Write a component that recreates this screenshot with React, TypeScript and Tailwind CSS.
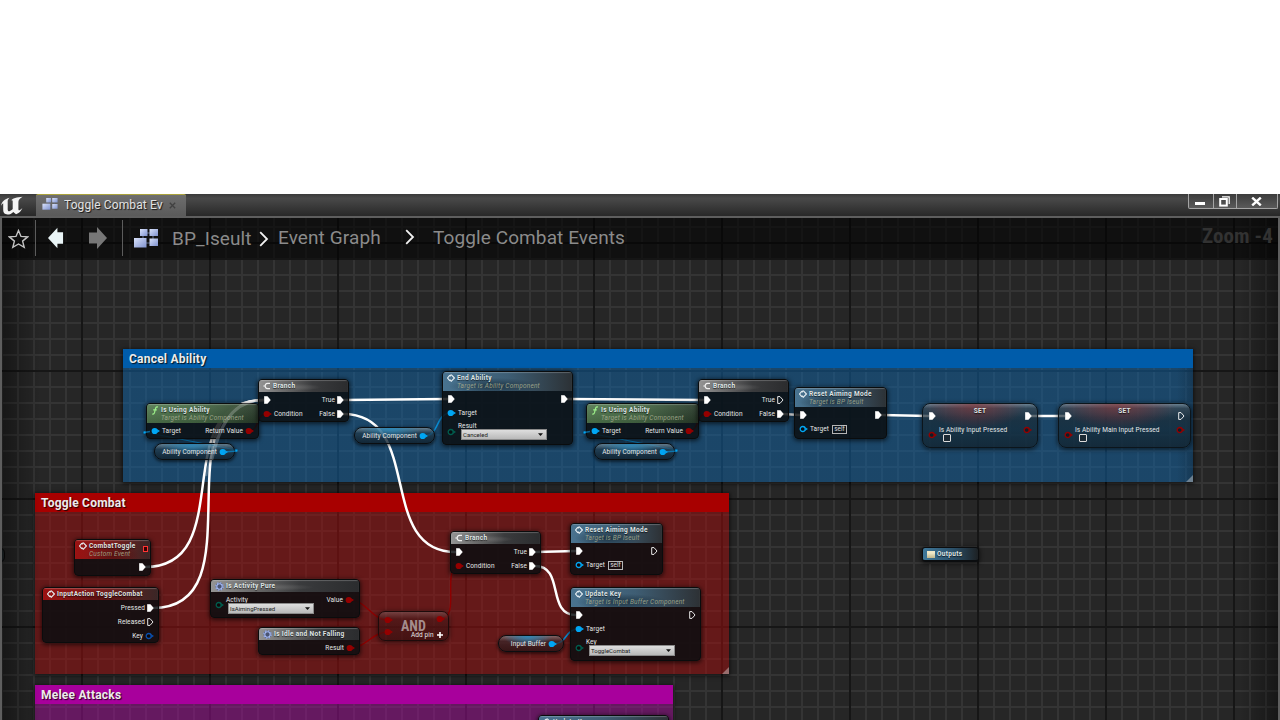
import type { ReactNode } from "react";

type PinKind = "exec" | "execOpen" | "dot" | "ring";

const BLUE = "text-[#00a6f4]";
const RED = "text-[#940000]";
const TEAL = "text-[#005d4e]";
const KEY = "text-[#0a4fae]";
const WHITE = "text-white";

function Pin({ kind, color = WHITE }: { kind: PinKind; color?: string }) {
  if (kind === "exec" || kind === "execOpen") {
    return (
      <svg className={`h-[8px] w-[7px] shrink-0 ${color}`} viewBox="0 0 7 8">
        <path
          d={kind === "exec" ? "M.2 .2H3.4L6.600 4L3.400 7.8H.2Z" : "M.7 .6H3L6 4L3 7.4H.7Z"}
          fill={kind === "exec" ? "currentColor" : "none"}
          stroke="currentColor"
          strokeWidth={kind === "exec" ? 0.2 : 0.9}
        />
      </svg>
    );
  }
  return (
    <svg className={`h-[8px] w-[9px] shrink-0 ${color}`} viewBox="0 0 9 8">
      <path d="M6.2 2.2L9 4L6.2 5.8Z" fill="currentColor" />
      <circle
        cx="3.7"
        cy="4"
        r={kind === "dot" ? 3.1 : 2.5}
        fill={kind === "dot" ? "currentColor" : "#0006"}
        stroke="currentColor"
        strokeWidth={kind === "dot" ? 0 : 1.3}
      />
    </svg>
  );
}

function EventIcon() {
  return (
    <svg className="h-[8px] w-[8px] shrink-0" viewBox="0 0 8 8" fill="none" stroke="#e6eef2" strokeWidth="1.1">
      <path d="M2.900 1.100L.6 4L2.900 6.900M4.200 .7L7.400 4L4.200 7.300L2.900 5.700M4.200 .7L2.900 2.300" />
    </svg>
  );
}

function BranchIcon() {
  return (
    <svg className="h-[8px] w-[8px] shrink-0" viewBox="0 0 8 8" fill="none" stroke="#f0f0f0" strokeWidth="1.2">
      <path d="M7 1.3H4.6Q2.2 1.5 2.1 4Q2.2 6.5 4.6 6.7H7M.3 4H2" />
    </svg>
  );
}

function FunctionIcon() {
  return (
    <svg className="h-[9px] w-[8px] shrink-0" viewBox="0 0 8 9" fill="none" stroke="#9df08a" strokeWidth="1.2">
      <path d="M7 1.1Q5 .4 4.5 2.6L3.5 6.7Q3 8.5 1.2 8M2.2 3.8H5.8" />
    </svg>
  );
}

function MacroIcon() {
  return (
    <svg className="h-[9px] w-[9px] shrink-0" viewBox="0 0 9 9" fill="none">
      <circle cx="4.5" cy="4.5" r="3.8" fill="#4a5472" />
      <circle cx="4.5" cy="4.5" r="3.7" stroke="#8fa6e8" strokeWidth="1.3" strokeDasharray="1.45 1.45" />
      <circle cx="4.5" cy="4.5" r="2.7" stroke="#a6baf2" strokeWidth="1.1" />
    </svg>
  );
}

const headFill = {
  blue: "bg-[radial-gradient(ellipse_at_40%_75%,#1a2f3ee0_0%,#1a2f3e00_42%),linear-gradient(90deg,#4e7c9be8_0%,#42657de8_50%,#2f3438e8_100%)]",
  green: "bg-[linear-gradient(180deg,#ffffff14_0%,#00000022_100%),linear-gradient(90deg,#5c8756e0_0%,#4c7249e0_50%,#2c3f2be0_100%)]",
  gray: "bg-[radial-gradient(ellipse_at_40%_60%,#77777799_0%,#77777700_35%),linear-gradient(90deg,#949494_0%,#686868_30%,#3a3b3d_60%,#2b2c2e_100%)]",
  red: "bg-[radial-gradient(ellipse_at_50%_80%,#40080899_0%,#40080800_50%),linear-gradient(90deg,#9b1111_0%,#7e1c1c_45%,#3a2626_100%)]",
};

function Title({ children }: { children: ReactNode }) {
  return (
    <span className="text-[6.5px] leading-[9px] font-bold tracking-[0.32px] text-[#dfe4e4] [text-shadow:0_1px_1px_#000a]">
      {children}
    </span>
  );
}

function GraphNode({
  place,
  tone,
  icon,
  title,
  sub,
  badge,
  children,
}: {
  place: string;
  tone: keyof typeof headFill;
  icon: ReactNode;
  title: string;
  sub?: string;
  badge?: boolean;
  children?: ReactNode;
}) {
  return (
    <section
      className={`absolute flex flex-col overflow-hidden rounded-[4px] border border-[#0a0c0d] bg-[#0b0e10d9] whitespace-nowrap shadow-[0_1px_4px_1px_#0009] ${place}`}
    >
      <header
        className={`flex shrink-0 gap-[2px] pl-[4px] shadow-[inset_0_1px_1px_#ffffff3a] ${sub ? "h-[19px] pt-[2px]" : "h-[12px] pt-[2px]"} ${headFill[tone]}`}
      >
        {icon}
        <div className="flex flex-col">
          <Title>{title}</Title>
          {sub && (
            <span className="text-[6.500px] leading-[7px] tracking-[0.200px] text-[#a3ab8f] italic opacity-90">{sub}</span>
          )}
        </div>
        {badge && (
          <span className="mt-[4px] mr-[2px] ml-auto h-[6px] w-[5px] border border-[#ff3434] bg-[#3a0000]" />
        )}
      </header>
      {children}
    </section>
  );
}

function Label({ children }: { children: ReactNode }) {
  return <span className="text-[6.5px] leading-[8px] tracking-[0.09px] text-[#e6e8e8]">{children}</span>;
}

function Row({ left, right, className = "h-[14px]" }: { left?: ReactNode; right?: ReactNode; className?: string }) {
  return (
    <div className={`flex shrink-0 items-center justify-between ${className}`}>
      <div className="flex items-center gap-[2px]">{left}</div>
      <div className="flex items-center gap-[2px]">{right}</div>
    </div>
  );
}

function Select({ value }: { value: string }) {
  return (
    <div className="flex h-[11px] w-[86px] items-center justify-between border border-[#8b8b8b] bg-linear-to-b from-[#dedede] to-[#b9b9b9] pr-[3px] pl-[1px] text-[6px] leading-[8px] text-[#222]">
      <span>{value}</span>
      <svg className="h-[3px] w-[5px]" viewBox="0 0 5 3">
        <path d="M0 .2H5L2.5 2.9Z" fill="#111" />
      </svg>
    </div>
  );
}

function UsingAbility({ place }: { place: string }) {
  return (
    <GraphNode place={`h-[36px] w-[113px] ${place}`} tone="green" icon={<FunctionIcon />} title="Is Using Ability" sub="Target is Ability Component">
      <Row
        className="h-[15px] pr-[4px] pl-[4px]"
        left={<><Pin kind="dot" color={BLUE} /><Label>Target</Label></>}
        right={<><Label>Return Value</Label><Pin kind="dot" color={RED} /></>}
      />
    </GraphNode>
  );
}

function Branch({ place, open }: { place: string; open?: boolean }) {
  return (
    <GraphNode place={`h-[43px] w-[91px] ${place}`} tone="gray" icon={<BranchIcon />} title="Branch">
      <Row
        className="mt-px h-[14px] pr-[4px] pl-[5px]"
        left={<Pin kind="exec" />}
        right={<><Label>True</Label><Pin kind={open ? "execOpen" : "exec"} /></>}
      />
      <Row
        className="h-[14px] pr-[4px] pl-[4px]"
        left={<><Pin kind="dot" color={RED} /><Label>Condition</Label></>}
        right={<><Label>False</Label><Pin kind="exec" /></>}
      />
    </GraphNode>
  );
}

function ResetAiming({ place, open }: { place: string; open?: boolean }) {
  return (
    <GraphNode place={`h-[52px] w-[93px] ${place}`} tone="blue" icon={<EventIcon />} title="Reset Aiming Mode" sub="Target is BP Iseult">
      <Row className="mt-px h-[14px] pr-[4px] pl-[5px]" left={<Pin kind="exec" />} right={<Pin kind={open ? "execOpen" : "exec"} />} />
      <Row
        className="h-[14px] px-[4px]"
        left={
          <>
            <Pin kind="ring" color={BLUE} />
            <Label>Target</Label>
            <span className="ml-px flex h-[9px] w-[15px] items-center justify-center border border-[#b5b5b5] text-[6.5px] leading-none text-[#ddd]">self</span>
          </>
        }
      />
    </GraphNode>
  );
}

function KeyedCall({
  place,
  title,
  sub,
  field,
  value,
  open,
}: {
  place: string;
  title: string;
  sub: string;
  field: string;
  value: string;
  open?: boolean;
}) {
  return (
    <GraphNode place={`h-[74px] w-[131px] ${place}`} tone="blue" icon={<EventIcon />} title={title} sub={sub}>
      <Row className="mt-px h-[14px] pr-[4px] pl-[5px]" left={<Pin kind="exec" />} right={<Pin kind={open ? "execOpen" : "exec"} />} />
      <Row className="h-[14px] px-[4px]" left={<><Pin kind="dot" color={BLUE} /><Label>Target</Label></>} />
      <div className="flex gap-[2px] pt-[2px] pl-[4px]">
        <div className="pt-[6px]"><Pin kind="ring" color={TEAL} /></div>
        <div className="flex flex-col">
          <Label>{field}</Label>
          <div className="-mt-px ml-[3px]"><Select value={value} /></div>
        </div>
      </div>
    </GraphNode>
  );
}

function Setter({ place, name, open }: { place: string; name: string; open?: boolean }) {
  return (
    <section
      className={`absolute flex h-[45px] flex-col rounded-[8px] border border-[#0c151b] bg-[radial-gradient(ellipse_45%_60%_at_45%_0%,#96303099_0%,#96303000_100%),linear-gradient(180deg,#8d9ba4b0_0%,#3a4852b8_10%,#1a2c38c0_35%,#142c3bc4_60%,#12222dc4_100%)] whitespace-nowrap shadow-[0_1px_4px_1px_#0008] ${place}`}
    >
      <div className="flex h-[12px] shrink-0 items-end justify-center"><Title>SET</Title></div>
      <Row className="-mt-[6px] h-[12px] pr-[5px] pl-[6px]" left={<Pin kind="exec" />} right={<Pin kind={open ? "execOpen" : "exec"} />} />
      <div className="flex items-start gap-[2px] pt-[4px] pr-[5px] pl-[5px]">
        <div className="pt-[5px]"><Pin kind="ring" color={RED} /></div>
        <div className="flex flex-col">
          <Label>{name}</Label>
          <span className="ml-[4px] h-[8px] w-[8px] rounded-[1px] border border-[#dcdcdc] bg-[#1c2a34]" />
        </div>
        <div className="ml-auto"><Pin kind="ring" color={RED} /></div>
      </div>
    </section>
  );
}

function Variable({ place, name, warm }: { place: string; name: string; warm?: boolean }) {
  return (
    <div
      className={`absolute flex h-[17px] items-center justify-end gap-[2px] rounded-[8px] border border-[#0b0e11] pr-[6px] whitespace-nowrap shadow-[0_1px_3px_1px_#0008] ${
        warm
          ? "bg-[radial-gradient(ellipse_at_45%_0%,#2d88b8_0%,#2d88b800_50%),linear-gradient(180deg,#8d7d7dc0_0%,#3a2528c0_35%,#2c1415d0_100%)]"
          : "bg-[radial-gradient(ellipse_at_45%_0%,#2d88b8_0%,#2d88b800_50%),linear-gradient(180deg,#7f919cc0_0%,#20394ac0_35%,#10202cd0_100%)]"
      } ${place}`}
    >
      <Label>{name}</Label>
      <Pin kind="dot" color={BLUE} />
    </div>
  );
}

function Comment({ place, head, title, grip }: { place: string; head: string; title: string; grip?: boolean }) {
  return (
    <section className={`absolute flex flex-col shadow-[0_1px_4px_1px_#0009] ${place}`}>
      <header
        className={`flex h-[19px] shrink-0 items-center pl-[6px] text-[12px] leading-none font-bold tracking-[0.22px] text-[#ececec] [text-shadow:1px_1px_1px_#000c] ${head}`}
      >
        {title}
      </header>
      {grip && (
        <svg className="mt-auto ml-auto h-[7px] w-[7px]" viewBox="0 0 7 7">
          <path d="M7 0V7H0Z" fill="#d8d8d8" opacity=".45" />
        </svg>
      )}
    </section>
  );
}

function BlueprintIcon({ className }: { className: string }) {
  return (
    <svg className={className} viewBox="0 0 24 19">
      <defs>
        <linearGradient id="tile" x1="0" y1="0" x2="1" y2="1">
          <stop offset="0" stopColor="#d9e2fa" />
          <stop offset="1" stopColor="#7f92cf" />
        </linearGradient>
      </defs>
      <path d="M12 4H17M19 7V12M12 14H17M9 6V10" stroke="#65708f" strokeWidth="1" />
      <rect x="6" y="0" width="7.500" height="7" fill="url(#tile)" />
      <rect x="15.500" y="0" width="8.500" height="7" fill="url(#tile)" />
      <rect x="0" y="9" width="12.500" height="9.500" fill="url(#tile)" />
      <rect x="15.500" y="9.500" width="8.500" height="7.500" fill="url(#tile)" />
    </svg>
  );
}

function Chevron() {
  return (
    <svg className="h-[16px] w-[10px] shrink-0" viewBox="0 0 10 16" fill="none" stroke="#f2f2f2" strokeWidth="1.8">
      <path d="M1.2 1.2L8 8L1.2 14.8" />
    </svg>
  );
}

function TitleBar() {
  return (
    <div className="flex h-[22px] shrink-0 items-start bg-linear-to-b from-[#3a3a3a] via-[#494949] via-20% to-[#282828]">
      <svg className="mt-px h-[20px] w-[24px] shrink-0" viewBox="0 0 24 20">
        <path
          d="M1 10.8C1.700 6.800 4.600 4 9.600 2.800C8.300 4 7.700 4.900 7.700 6.300V14.200C7.700 15.800 8.500 16.400 9.400 16.200C10.700 15.900 11.800 15.100 12.700 14.100V6.500C12.700 5.500 12.300 5.200 11.200 5.300C12.700 3.800 14.300 2.900 16.900 2.500L22.600 1.800C19.800 3.600 18.400 4.800 18.400 6.900V13.800C18.400 15.100 18.800 15.500 19.600 15.200C20.600 14.800 21.500 14 22.400 13C21.300 16 18.900 18.300 16 19.300L13.300 16.900C11.800 18.500 9.800 19.600 7.500 19.600C4.400 19.500 3.200 17.700 3.200 15.100V8.300C2.200 8.800 1.600 9.700 1 10.800Z"
          fill="#f4f4f4"
        />
      </svg>
      <div className="ml-[12px] flex h-[22px] w-[150px] items-center rounded-t-[2px] border-t border-[#aaa23c] bg-linear-to-b from-[#6e6e6e] to-[#5a5a5a] pl-[6px]">
        <BlueprintIcon className="-mt-[3px] h-[12px] w-[16px]" />
        <span className="-mt-[2px] ml-[6px] w-[100px] overflow-hidden text-[12px] leading-[16px] tracking-[0.1px] whitespace-nowrap text-[#e2e2e2] [text-shadow:1px_1px_1px_#000c]">
          Toggle Combat Ev
        </span>
        <svg className="-mt-px ml-[5px] h-[7px] w-[7px]" viewBox="0 0 7 7" stroke="#404040" strokeWidth="1.3">
          <path d="M.8 .8L6.2 6.2M6.2 .8L.8 6.2" />
        </svg>
      </div>
      <div className="mr-[2px] ml-auto flex h-[15px] w-[90px] divide-x divide-[#a5a5a5] rounded-b-[2px] border border-t-0 border-[#a5a5a5] bg-linear-to-b from-[#3c3c3c] to-[#5a5a5a]">
        <div className="flex w-[25px] justify-center pt-[8px] pr-[2px]"><span className="h-[3px] w-[10px] bg-white" /></div>
        <div className="flex w-[23px] justify-center pt-[2px] pr-px">
          <svg className="h-[11px] w-[11px]" viewBox="0 0 11 11" fill="none">
            <path d="M3 .8H10.2V8" stroke="#fff" strokeWidth="1.2" />
            <rect x="1.200" y="3" width="6.600" height="6.600" stroke="#fff" strokeWidth="2" />
          </svg>
        </div>
        <div className="flex flex-1 justify-center pt-[3px] pr-[2px]">
          <svg className="h-[9px] w-[11px]" viewBox="0 0 11 9" stroke="#fff" strokeWidth="2.4">
            <path d="M1.2 .6L9.8 8.4M9.8 .6L1.2 8.4" />
          </svg>
        </div>
      </div>
    </div>
  );
}

function Breadcrumbs() {
  return (
    <nav className="absolute top-0 left-0 flex h-[42px] w-full items-center bg-[#00000094] pb-[2px] text-[19px] leading-none tracking-[0.1px] whitespace-nowrap text-[#8b8b8b]">
      <svg className="mt-[2px] ml-[6px] h-[20px] w-[21px] shrink-0" viewBox="0 0 21 20" fill="none" stroke="#c4c4c4" strokeWidth="1.4">
        <path d="M10.500 1.500L13 7.400L19.600 7.900L14.600 12.100L16.200 18.400L10.500 15L4.800 18.400L6.400 12.100L1.400 7.900L8 7.400Z" />
      </svg>
      <span className="ml-[6px] h-[36px] w-px bg-[#5c5c5c]" />
      <svg className="ml-[12px] h-[24px] w-[16px] shrink-0" viewBox="0 0 17 24">
        <path d="M0 12L10 1V6H16V18H10V23Z" fill="#e9f4f6" />
      </svg>
      <svg className="ml-[25px] h-[24px] w-[18px] shrink-0" viewBox="0 0 18 24">
        <path d="M18 12L8 1V6.500H0V17.500H8V23Z" fill="#777" />
      </svg>
      <span className="ml-[15px] h-[36px] w-px bg-[#5c5c5c]" />
      <BlueprintIcon className="ml-[11px] h-[19px] w-[24px] shrink-0" />
      <span className="ml-[14px] w-[82px]">BP_Iseult</span>
      <span className="mt-px ml-[5px] flex"><Chevron /></span>
      <span className="-mt-px ml-[9px] w-[105px]">Event Graph</span>
      <span className="-mt-[2px] ml-[22px] flex"><Chevron /></span>
      <span className="-mt-px ml-[18px]">Toggle Combat Events</span>
      <span className="-mt-[3px] mr-[5px] ml-auto font-['Roboto_Condensed','Roboto'] text-[21px] font-bold text-[#323232]">Zoom -4</span>
    </nav>
  );
}

function Wires() {
  return (
    <svg className="absolute top-0 left-0 h-[720px] w-[1280px]" viewBox="0 0 1280 720" fill="none">
      <g stroke="#fff" strokeWidth="2.5">
        <path d="M343 400L448 399" />
        <path d="M343 414C425 414 375 552 456 552" />
        <path d="M567 399L704 400" />
        <path d="M783 414L800 415" />
        <path d="M881 415L929 416" />
        <path d="M1031 416H1065" />
        <path d="M535 552L576 551" />
        <path d="M535 566C565 566 546 615 576 615" />
        <path d="M145 567C240 567 165 400 264 400" />
        <path d="M153 608C260 608 157 400 264 400" />
      </g>
      <g stroke="#0a8fd6" strokeWidth="1.6">
        <path d="M424 436C440 436 435 413 451 413" />
        <path d="M553 644C568 644 564 629 579 629" />
        <path d="M144 432L236 450" strokeWidth="1.200" />
        <path d="M584 432L676 450" strokeWidth="1.200" />
      </g>
      <g stroke="#8e0000" strokeWidth="1.4">
        <path d="M248 431C261 431 254 414 267 414" />
        <path d="M688 431C701 431 694 414 707 414" />
        <path d="M350 600C366 600 372 620 388 620" />
        <path d="M350 648C366 648 372 632 388 632" />
        <path d="M440 619C462 619 440 566 460 566" />
      </g>
    </svg>
  );
}

function WireStubs() {
  return (
    <svg className="pointer-events-none absolute top-0 left-0 h-[720px] w-[1280px]" viewBox="0 0 1280 720" fill="none">
      <g stroke="#0a9ae6" strokeWidth="1.300" opacity=".6">
        <path d="M223 452L237 451" />
        <path d="M663 452L677 451" />
        <path d="M150 431.500L144 432.500" />
        <path d="M590 431.500L584 432.500" />
      </g>
      <g stroke="#fff" strokeWidth="2.500" opacity=".22">
        <path d="M206 476C216 436 226 407 252 401" />
        <path d="M212 460C220 425 232 405 255 401" />
      </g>
      <path d="M143.500 431.500h2v2h-2zM583.500 431.500h2v2h-2zM235.500 449.500h2v2h-2zM675.500 449.500h2v2h-2z" fill="#00a6f4" />
    </svg>
  );
}

function Graph() {
  return (
    <div className="absolute -top-[218px] -left-[2px] h-[720px] w-[1280px]">
      <Comment place="left-[123px] top-[349px] h-[133px] w-[1070px] bg-[linear-gradient(90deg,#1066aa00_98.500%,#0b1c2c50_100%),linear-gradient(#1066aa80,#1066aa80)]" head="bg-[#005caa]" title="Cancel Ability" grip />
      <Comment place="left-[35px] top-[493px] h-[181px] w-[694px] bg-[#a40c0c80]" head="bg-[#a80000]" title="Toggle Combat" grip />
      <Comment place="left-[35px] top-[685px] h-[60px] w-[638px] bg-[#a40c9a80]" head="bg-[#a8009c]" title="Melee Attacks" />
      <Wires />

      <Variable place="left-[154px] top-[443px] w-[81px]" name="Ability Component" />
      <Variable place="left-[594px] top-[443px] w-[81px]" name="Ability Component" />
      <Variable place="left-[354px] top-[427px] w-[81px]" name="Ability Component" />
      <Variable place="left-[498px] top-[635px] w-[66px]" name="Input Buffer" warm />

      <UsingAbility place="left-[146px] top-[403px]" />
      <UsingAbility place="left-[586px] top-[403px]" />
      <Branch place="left-[258px] top-[379px]" />
      <Branch place="left-[698px] top-[379px]" open />
      <Branch place="left-[450px] top-[531px]" />
      <KeyedCall place="left-[442px] top-[371px]" title="End Ability" sub="Target is Ability Component" field="Result" value="Canceled" />
      <KeyedCall place="left-[570px] top-[587px]" title="Update Key" sub="Target is Input Buffer Component" field="Key" value="ToggleCombat" open />
      <ResetAiming place="left-[794px] top-[387px]" />
      <ResetAiming place="left-[570px] top-[523px]" open />
      <Setter place="left-[922px] top-[403px] w-[116px]" name="Is Ability Input Pressed" />
      <Setter place="left-[1058px] top-[403px] w-[133px]" name="Is Ability Main Input Pressed" open />

      <GraphNode place="left-[74px] top-[539px] h-[37px] w-[77px]" tone="red" icon={<EventIcon />} title="CombatToggle" sub="Custom Event" badge>
        <Row className="mt-px h-[14px] px-[4px]" right={<Pin kind="exec" />} />
      </GraphNode>

      <GraphNode place="left-[42px] top-[587px] h-[56px] w-[117px]" tone="red" icon={<EventIcon />} title="InputAction ToggleCombat">
        <Row className="mt-px h-[14px] pr-[4px]" right={<><Label>Pressed</Label><Pin kind="exec" /></>} />
        <Row className="h-[14px] pr-[4px]" right={<><Label>Released</Label><Pin kind="execOpen" /></>} />
        <Row className="h-[14px] pr-[4px]" right={<><Label>Key</Label><Pin kind="ring" color={KEY} /></>} />
      </GraphNode>

      <GraphNode place="left-[210px] top-[579px] h-[39px] w-[150px]" tone="gray" icon={<MacroIcon />} title="Is Activity Pure">
        <div className="flex pt-[4px] pr-[5px] pl-[4px]">
          <div className="pt-[5px]"><Pin kind="ring" color={TEAL} /></div>
          <div className="ml-[2px] flex flex-col">
            <Label>Activity</Label>
            <div className="-mt-px ml-[2px]"><Select value="IsAimingPressed" /></div>
          </div>
          <div className="ml-auto flex h-[8px] items-center gap-[2px]">
            <Label>Value</Label>
            <Pin kind="dot" color={RED} />
          </div>
        </div>
      </GraphNode>

      <GraphNode place="left-[258px] top-[627px] h-[28px] w-[102px]" tone="gray" icon={<MacroIcon />} title="Is Idle and Not Falling">
        <Row className="mt-px h-[14px] pr-[4px]" right={<><Label>Result</Label><Pin kind="dot" color={RED} /></>} />
      </GraphNode>

      <section className="absolute top-[611px] left-[378px] flex h-[30px] w-[71px] items-start rounded-[7px] border border-[#1d0b0b] bg-[linear-gradient(180deg,#84696980_0%,#40181880_25%,#2c0d0d90_100%)] pl-[5px] shadow-[0_1px_4px_1px_#0007]">
        <div className="flex flex-col gap-[4px] pt-[4px]">
          <Pin kind="dot" color={RED} />
          <Pin kind="dot" color={RED} />
        </div>
        <div className="ml-[8px] flex flex-col whitespace-nowrap">
          <span className="mt-[9px] font-['Roboto_Condensed','Roboto'] text-[14px] leading-[11px] font-bold text-[#a48c8c]">AND</span>
          <span className="-mt-px ml-[10px] flex items-center gap-[3px]">
            <Label>Add pin</Label>
            <svg className="h-[6px] w-[6px]" viewBox="0 0 6 6" stroke="#fff" strokeWidth="1.6"><path d="M3 0V6M0 3H6" /></svg>
          </span>
        </div>
        <div className="absolute top-[3px] right-[3px] flex"><Pin kind="dot" color={RED} /></div>
      </section>

      <section className="absolute top-[547px] left-[922px] flex h-[15px] w-[57px] items-center gap-[2px] rounded-[3px] border border-b-2 border-[#0b0d0f] bg-[linear-gradient(90deg,#3f789a_0%,#2b5069_55%,#1d2124_100%)] pl-[4px] shadow-[0_1px_4px_1px_#0008]">
        <span className="h-[7px] w-[8px] bg-linear-to-b from-[#efe8c8] from-30% to-[#bdb58c]" />
        <Title>Outputs</Title>
      </section>

      <GraphNode place="left-[538px] top-[715px] h-[40px] w-[131px]" tone="blue" icon={<EventIcon />} title="Update Key" />
      <div className="absolute top-[547px] -left-[16px] h-[16px] w-[21px] rounded-[6px] border border-[#0a0a0a] bg-[#20282b]" />
      <WireStubs />
    </div>
  );
}

export default function App() {
  return (
    <main className="flex h-[720px] w-[1280px] flex-col overflow-hidden bg-white pt-[194px] font-[Roboto,sans-serif]">
      <TitleBar />
      <div className="relative flex-1 overflow-hidden border-x-2 border-t-2 border-[#5e5e5e] bg-[#262626]">
        <div className="absolute inset-0 bg-[linear-gradient(90deg,#343434_2px,transparent_2px),linear-gradient(180deg,#343434_2px,transparent_2px)] bg-[size:16px_16px] bg-[position:-1px_-8px]" />
        <div className="absolute inset-0 bg-[linear-gradient(90deg,#161616_2px,transparent_2px),linear-gradient(180deg,#161616_2px,transparent_2px)] bg-[size:128px_128px] bg-[position:79px_24px]" />
        <Graph />
        <div className="pointer-events-none absolute inset-0 bg-[linear-gradient(90deg,#0006_0%,#0000_3%,#0000_97%,#0006_100%)]" />
        <Breadcrumbs />
      </div>
    </main>
  );
}
